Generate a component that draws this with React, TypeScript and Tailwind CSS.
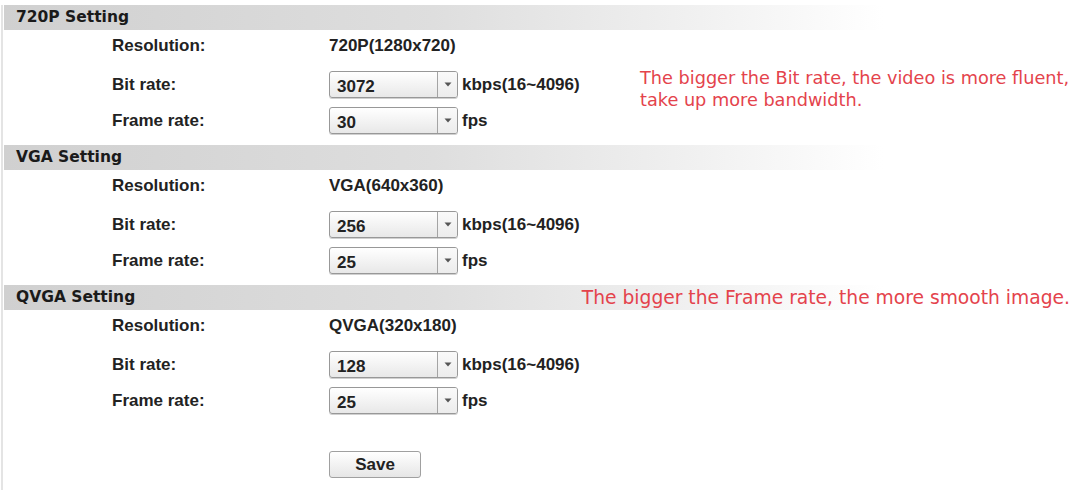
const label = "font-['Liberation_Sans',Arial,sans-serif] font-bold text-[17px] text-[#222]";
const red = "font-['DejaVu_Sans',Verdana,sans-serif] text-[#e4434c] leading-[22px]";

function Header({ title, note }: { title: string; note?: string }) {
  return (
    <div className="flex h-[25px] items-center justify-between bg-[linear-gradient(to_right,#d0d0d0_0%,#dedede_40%,#f1f1f1_65%,#ffffff_82%)] pl-[12px] pr-[6px]">
      <span className="font-['DejaVu_Sans',Verdana,sans-serif] text-[15.5px] font-bold text-[#1a1a1a]">{title}</span>
      {note ? <span className={`${red} text-[18.7px]`}>{note}</span> : null}
    </div>
  );
}

function Select({ value }: { value: string }) {
  return (
    <div className="flex h-[27px] w-[129px] overflow-hidden rounded-[3px] border border-[#989898] bg-gradient-to-b from-white to-[#e8e8e8] shadow-[0_1px_0_#d0d0d0]">
      <div className={`${label} flex-1 pl-[7px] pt-[4px] leading-[22px]`}>{value}</div>
      <div className="flex w-[20px] items-center justify-center border-l border-[#a4a4a4] bg-gradient-to-b from-[#fafafa] to-[#ececec]">
        <svg width="8" height="5" viewBox="0 0 8 5">
          <polygon points="0.5,0.5 7.5,0.5 4,4.5" fill="#555" />
        </svg>
      </div>
    </div>
  );
}

function Row({ name, children }: { name: string; children: React.ReactNode }) {
  return (
    <div className="flex items-center">
      <div className={`${label} w-[325px] pl-[108px]`}>{name}</div>
      {children}
    </div>
  );
}

function Section({ title, res, bit, fps, headerNote, aside }: {
  title: string;
  res: string;
  bit: string;
  fps: string;
  headerNote?: string;
  aside?: React.ReactNode;
}) {
  return (
    <div className="pb-[9px]">
      <Header title={title} note={headerNote} />
      <div className="flex">
        <div className="flex w-[636px] flex-col">
          <div className="h-[32px]">
            <Row name="Resolution:">
              <div className={`${label} h-[32px] leading-[32px]`}>{res}</div>
            </Row>
          </div>
          <div className="mt-[7px] flex h-[31px] items-center">
            <Row name="Bit rate:">
              <Select value={bit} />
              <span className={`${label} ml-[4px]`}>kbps(16~4096)</span>
            </Row>
          </div>
          <div className="mt-[5px] flex h-[31px] items-center">
            <Row name="Frame rate:">
              <Select value={fps} />
              <span className={`${label} ml-[4px]`}>fps</span>
            </Row>
          </div>
        </div>
        {aside}
      </div>
    </div>
  );
}

export default function App() {
  return (
    <div className="min-h-[490px] bg-white pt-[5px]">
      <div className="ml-[1px] min-h-[485px] border-l-2 border-[#e4e4e4] pl-[1px]">
        <Section
          title="720P Setting"
          res="720P(1280x720)"
          bit="3072"
          fps="30"
          aside={
            <div className={`${red} mt-[37px] whitespace-nowrap text-[17.7px]`}>
              The bigger the Bit rate, the video is more fluent,
              <br />
              take up more bandwidth.
            </div>
          }
        />
        <Section title="VGA Setting" res="VGA(640x360)" bit="256" fps="25" />
        <Section
          title="QVGA Setting"
          res="QVGA(320x180)"
          bit="128"
          fps="25"
          headerNote="The bigger the Frame rate, the more smooth image."
        />
        <div className="mt-[26px] pl-[325px]">
          <button
            type="button"
            className={`${label} h-[27px] w-[92px] rounded-[3px] border border-[#a0a0a0] bg-gradient-to-b from-white to-[#e6e6e6] leading-[24px]`}
          >
            Save
          </button>
        </div>
      </div>
    </div>
  );
}
